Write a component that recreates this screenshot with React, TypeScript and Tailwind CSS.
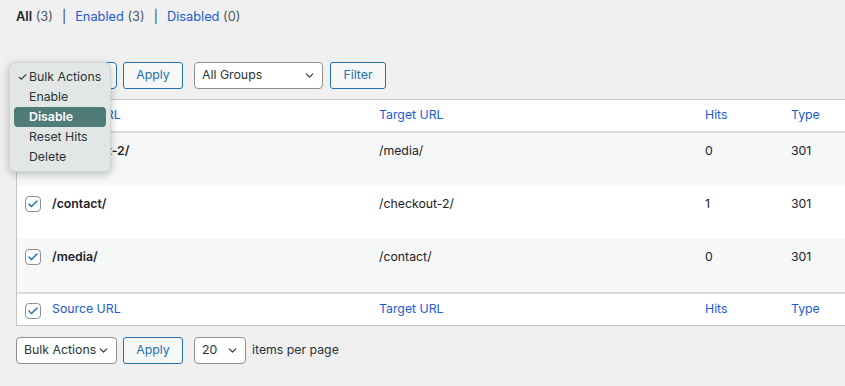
import { Check, ChevronDown } from "lucide-react";

const rows = [
    { source: "/checkout-2/", target: "/media/", hits: 0, type: 301 },
    { source: "/contact/", target: "/checkout-2/", hits: 1, type: 301 },
    { source: "/media/", target: "/contact/", hits: 0, type: 301 },
];

const cols = "grid grid-cols-[35px_327px_326px_86px_1fr]";

const Box = () => (
    <span className="w-4 h-4 rounded-[4px] border border-[#8c8f94] bg-white flex items-center justify-center">
        <Check size={12} strokeWidth={3} className="text-[#2271b1]" />
    </span>
);

const Select = ({ label, width, focused }: { label: string; width: string; focused?: boolean }) => (
    <div
        className={`${width} h-[27px] bg-white rounded-[4px] border flex items-center justify-between pl-[7px] pr-[6px] text-[#2c3338] whitespace-nowrap ${
            focused ? "border-[#2271b1]" : "border-[#8c8f94]"
        }`}
    >
        <span>{label}</span>
        <ChevronDown size={13} strokeWidth={2} className="text-[#2c3338] shrink-0" />
    </div>
);

const Btn = ({ label, width }: { label: string; width: string }) => (
    <div className={`${width} h-[27px] rounded-[3px] border border-[#2271b1] bg-[#f6f7f7] flex items-center justify-center text-[#2271b1]`}>
        {label}
    </div>
);

export default function App() {
    return (
        <div className="relative w-[845px] h-[386px] overflow-hidden bg-[#f0f0f1] font-['Inter',sans-serif] text-[12.3px] text-[#1d2327]">
            <div className="pl-4 pt-[8px] leading-[18px] flex items-center gap-[9px] text-[12.8px]">
                <span>
                    <span className="font-semibold">All</span> <span className="text-[#50575e]">(3)</span>
                </span>
                <span className="text-[#3c434a]">|</span>
                <span>
                    <span className="text-[#1a5bd6]">Enabled</span> <span className="text-[#50575e]">(3)</span>
                </span>
                <span className="text-[#3c434a]">|</span>
                <span>
                    <span className="text-[#1a5bd6]">Disabled</span> <span className="text-[#50575e]">(0)</span>
                </span>
            </div>

            <div className="pl-4 mt-[36px] flex items-center">
                <Select label="Bulk Actions" width="w-[101px]" focused />
                <div className="ml-[6px]"><Btn label="Apply" width="w-[60px]" /></div>
                <div className="ml-[11px]"><Select label="All Groups" width="w-[129px]" /></div>
                <div className="ml-[7px]"><Btn label="Filter" width="w-[56px]" /></div>
            </div>

            <div className="ml-4 mt-[10px] w-[860px] bg-white border border-[#c3c4c7]">
                <div className={`${cols} h-[33px] items-center border-b-2 border-[#dcdcde] text-[#1a5bd6]`}>
                    <div className="pl-2"><Box /></div>
                    <div>Source URL</div>
                    <div>Target URL</div>
                    <div>Hits</div>
                    <div>Type</div>
                </div>
                {rows.map((r, i) => (
                    <div key={i} className={`${cols} h-[53px] pt-[9px] leading-[18px] ${i % 2 === 0 ? "bg-[#f6f7f7]" : "bg-white"}`}>
                        <div className="pl-2 pt-[1px]"><Box /></div>
                        <div className="font-semibold">{r.source}</div>
                        <div>{r.target}</div>
                        <div>{r.hits}</div>
                        <div>{r.type}</div>
                    </div>
                ))}
                <div className={`${cols} h-[33px] items-center border-t-2 border-[#dcdcde] text-[#1a5bd6]`}>
                    <div className="pl-2 pt-[2px]"><Box /></div>
                    <div>Source URL</div>
                    <div>Target URL</div>
                    <div>Hits</div>
                    <div>Type</div>
                </div>
            </div>

            <div className="pl-4 mt-[11px] flex items-center">
                <Select label="Bulk Actions" width="w-[101px]" />
                <div className="ml-[6px]"><Btn label="Apply" width="w-[60px]" /></div>
                <div className="ml-[11px]"><Select label="20" width="w-[52px]" /></div>
                <span className="ml-[6px] text-[#2c3338]">items per page</span>
            </div>

            {/* open bulk actions menu */}
            <div className="absolute left-[9px] top-[62px] w-[102px] h-[110px] rounded-[6px] bg-[#e2e7e6] shadow-[0_2px_8px_rgba(0,0,0,0.25)] border border-[#d0d6d5] px-[4px] pt-[4px] text-[#2c3338] leading-[20px] whitespace-nowrap">
                <div className="flex items-center pl-[3px]">
                    <span className="w-[12px] text-[12px]">✓</span>
                    <span>Bulk Actions</span>
                </div>
                <div className="pl-[15px]">Enable</div>
                <div className="pl-[15px] rounded-[4px] bg-[#4f7b79] text-white font-semibold">Disable</div>
                <div className="pl-[15px]">Reset Hits</div>
                <div className="pl-[15px]">Delete</div>
            </div>
        </div>
    );
}
